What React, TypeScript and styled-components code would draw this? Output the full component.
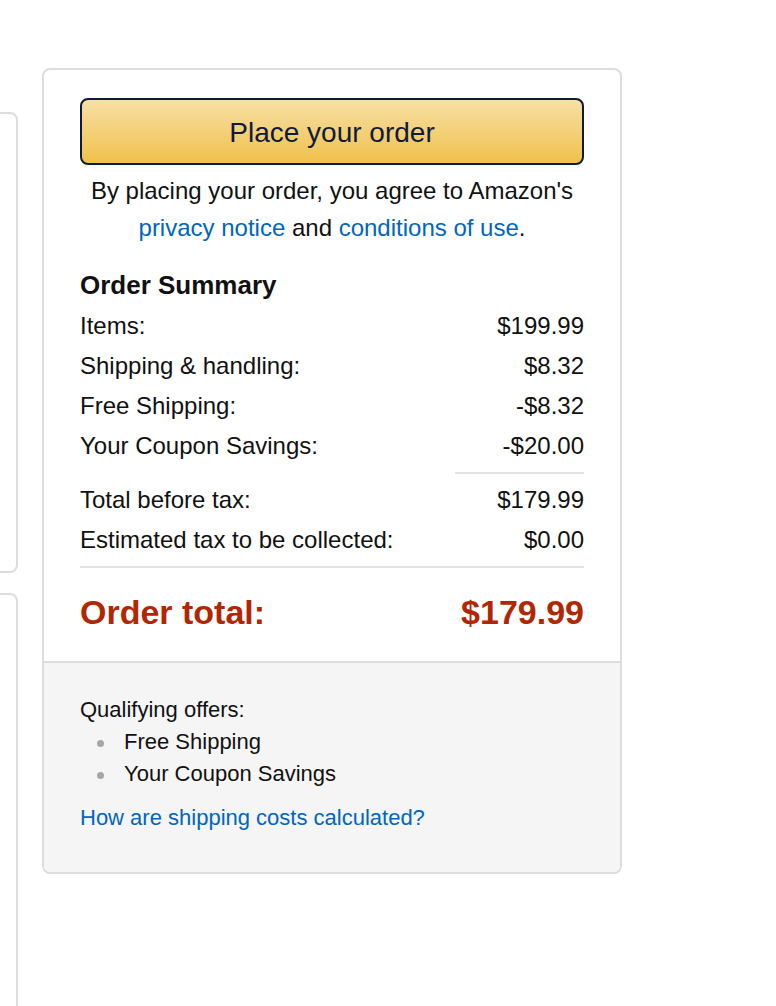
import styled, { createGlobalStyle } from 'styled-components';

const GlobalStyle = createGlobalStyle`
    html, body {
        margin: 0;
        padding: 0;
        background: #fff;
        font-family: 'Liberation Sans', Arial, sans-serif;
        color: #111;
    }
`;

const Page = styled.div`
    display: flex;
    align-items: flex-start;
    gap: 24px;
    width: 776px;
    height: 1006px;
    overflow: hidden;
`;

const SideColumn = styled.div`
    flex: none;
    width: 200px;
    margin-left: -182px;
    padding-top: 112px;
    display: flex;
    flex-direction: column;
    gap: 20px;
`;

const SideCard = styled.div<{ $height: number }>`
    height: ${({ $height }) => $height}px;
    box-sizing: border-box;
    border: 2px solid #ddd;
    border-radius: 8px;
`;

const SummaryCard = styled.div`
    flex: none;
    width: 580px;
    margin-top: 68px;
    box-sizing: border-box;
    border: 2px solid #ddd;
    border-radius: 8px;
    overflow: hidden;
`;

const Body = styled.div`
    padding: 28px 36px 29px;
`;

const PlaceButton = styled.button`
    display: block;
    width: 100%;
    height: 67px;
    padding-top: 4px;
    border: 2px solid #0d1a3a;
    border-radius: 8px;
    background: linear-gradient(to bottom, #f7dfa5, #f0c14b);
    font-family: inherit;
    font-size: 28px;
    color: #0f1b3d;
    cursor: pointer;
`;

const Agreement = styled.p`
    margin: 7px 0 0;
    text-align: center;
    font-size: 24px;
    line-height: 37px;
`;

const Link = styled.a`
    color: #0066c0;
    text-decoration: none;
`;

const Heading = styled.h3`
    margin: 19px 0 1px;
    font-size: 26px;
    line-height: 40px;
    font-weight: bold;
`;

const Row = styled.div`
    display: flex;
    justify-content: space-between;
    font-size: 24px;
    line-height: 40px;
`;

const Divider = styled.hr<{ $short?: boolean }>`
    border: none;
    border-top: 2px solid #e3e3e3;
    width: ${({ $short }) => ($short ? '129px' : '100%')};
    margin: 6px 0 6px auto;
`;

const TotalRow = styled(Row)`
    margin-top: 24px;
    font-size: 34px;
    font-weight: bold;
    color: #b12704;
`;

const Footer = styled.div`
    border-top: 2px solid #ddd;
    background: #f5f5f5;
    padding: 31px 36px 38px;
    font-size: 22px;
    line-height: 32px;
`;

const OfferList = styled.ul`
    margin: 0;
    padding: 0;
    list-style: none;
`;

const OfferItem = styled.li`
    display: flex;
    align-items: center;

    &::before {
        content: '';
        width: 7px;
        height: 7px;
        margin: 2px 20px 0 17px;
        border-radius: 50%;
        background: #a6a6a6;
    }
`;

const FooterLink = styled(Link)`
    display: block;
    margin-top: 12px;
`;

const rows = [
    ['Items:', '$199.99'],
    ['Shipping & handling:', '$8.32'],
    ['Free Shipping:', '-$8.32'],
    ['Your Coupon Savings:', '-$20.00'],
];

const taxRows = [
    ['Total before tax:', '$179.99'],
    ['Estimated tax to be collected:', '$0.00'],
];

export default function App() {
    return (
        <>
            <GlobalStyle />
            <Page>
                <SideColumn>
                    <SideCard $height={461} />
                    <SideCard $height={500} />
                </SideColumn>
                <SummaryCard>
                    <Body>
                        <PlaceButton>Place your order</PlaceButton>
                        <Agreement>
                            By placing your order, you agree to Amazon's
                            <br />
                            <Link href='#'>privacy notice</Link> and{' '}
                            <Link href='#'>conditions of use</Link>.
                        </Agreement>
                        <Heading>Order Summary</Heading>
                        {rows.map(([label, value]) => (
                            <Row key={label}>
                                <span>{label}</span>
                                <span>{value}</span>
                            </Row>
                        ))}
                        <Divider $short />
                        {taxRows.map(([label, value]) => (
                            <Row key={label}>
                                <span>{label}</span>
                                <span>{value}</span>
                            </Row>
                        ))}
                        <Divider />
                        <TotalRow>
                            <span>Order total:</span>
                            <span>$179.99</span>
                        </TotalRow>
                    </Body>
                    <Footer>
                        Qualifying offers:
                        <OfferList>
                            <OfferItem>Free Shipping</OfferItem>
                            <OfferItem>Your Coupon Savings</OfferItem>
                        </OfferList>
                        <FooterLink href='#'>How are shipping costs calculated?</FooterLink>
                    </Footer>
                </SummaryCard>
            </Page>
        </>
    );
}
